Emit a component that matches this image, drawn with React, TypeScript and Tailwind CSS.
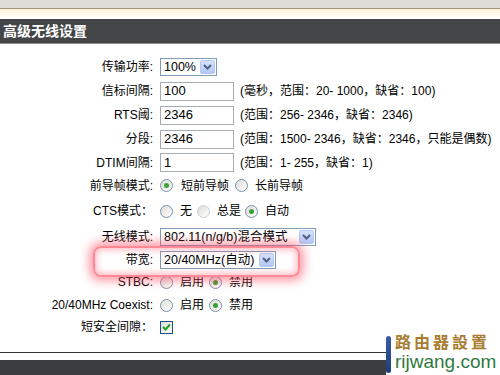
import React from "react"

function Arrow() {
  return (
    <span className="flex h-[14px] w-[15px] items-center justify-center rounded-[2px] border border-[#b4c8f4] bg-gradient-to-b from-[#d6e2fc] to-[#b3c6f5]">
      <svg width="9" height="6" viewBox="0 0 9 6">
        <path d="M1 1 L4.5 4.5 L8 1" fill="none" stroke="#4d6185" strokeWidth="2" />
      </svg>
    </span>
  )
}

function Select({ value, w }: { value: string; w: string }) {
  return (
    <div className={`flex h-[18px] items-center justify-between border border-[#7f9db9] bg-white pl-[3px] pr-px ${w}`}>
      <span className="text-[12.5px] leading-none">{value}</span>
      <Arrow />
    </div>
  )
}

function Input({ value }: { value: string }) {
  return (
    <div className="flex h-[19px] w-[74px] items-center border border-[#a5acb2] bg-white pl-[3px] text-[13px]">
      {value}
    </div>
  )
}

function Radio({ on, faint }: { on?: boolean; faint?: boolean }) {
  return (
    <span
      className={`flex h-[13px] w-[13px] items-center justify-center rounded-full border bg-gradient-to-br from-[#dcdcd7] to-white ${
        faint ? "border-[#c9d3dc]" : "border-[#7b93aa]"
      }`}
    >
      {on && <span className="h-[5px] w-[5px] rounded-full bg-[#3aa03a]" />}
    </span>
  )
}

function Row({ label, h, children }: { label: string; h: string; children: React.ReactNode }) {
  return (
    <div className={`flex items-center ${h}`}>
      <div className="w-[153px] shrink-0 text-right">{label}</div>
      <div className="ml-[7px] flex items-center">{children}</div>
    </div>
  )
}

export default function App() {
  return (
    <div className="relative h-[375px] w-[500px] overflow-hidden bg-white font-['Liberation_Sans','Noto_Sans_CJK_SC',sans-serif] text-[12px] text-black">
      {/* browser chrome strip */}
      <div className="h-[8px] bg-[#dedbd7]" />
      <div className="h-px bg-[#a8907f]" />
      <div className="h-[10px] bg-gradient-to-b from-[#fdf0d6] to-white" />

      {/* title */}
      <div className="flex h-[25px] items-center border-b border-[#8a8a8a] bg-[#434547] pl-[3px] text-[14px] font-bold text-white">
        高级无线设置
      </div>

      <div className="pt-[11px]">
        <Row label="传输功率:" h="h-[24px]">
          <Select value="100%" w="w-[57px]" />
        </Row>
        <Row label="信标间隔:" h="h-[24px]">
          <Input value="100" />
          <span className="ml-[6px]">(毫秒，范围：20- 1000，缺省：100)</span>
        </Row>
        <Row label="RTS阈:" h="h-[24px]">
          <Input value="2346" />
          <span className="ml-[6px]">(范围：256- 2346，缺省：2346)</span>
        </Row>
        <Row label="分段:" h="h-[24px]">
          <Input value="2346" />
          <span className="ml-[6px]">(范围：1500- 2346，缺省：2346，只能是偶数)</span>
        </Row>
        <Row label="DTIM间隔:" h="h-[23px]">
          <Input value="1" />
          <span className="ml-[6px]">(范围：1- 255，缺省：1)</span>
        </Row>
        <Row label="前导帧模式:" h="h-[23px]">
          <Radio on />
          <span className="ml-[8px]">短前导帧</span>
          <span className="ml-[6px]"><Radio /></span>
          <span className="ml-[7px]">长前导帧</span>
        </Row>
        <Row label="CTS模式：" h="h-[28px]">
          <Radio />
          <span className="ml-[7px]">无</span>
          <span className="ml-[5px]"><Radio faint /></span>
          <span className="ml-[7px]">总是</span>
          <span className="ml-[4px]"><Radio on /></span>
          <span className="ml-[7px]">自动</span>
        </Row>
        <Row label="无线模式:" h="h-[24px]">
          <Select value="802.11(n/g/b)混合模式" w="w-[156px]" />
        </Row>
        <Row label="带宽:" h="h-[22px]">
          <Select value="20/40MHz(自动)" w="w-[116px]" />
        </Row>
        <Row label="STBC:" h="h-[22px]">
          <Radio />
          <span className="ml-[7px]">启用</span>
          <span className="ml-[5px]"><Radio on /></span>
          <span className="ml-[7px]">禁用</span>
        </Row>
        <Row label="20/40MHz Coexist:" h="h-[24px]">
          <Radio />
          <span className="ml-[7px]">启用</span>
          <span className="ml-[5px]"><Radio on /></span>
          <span className="ml-[7px]">禁用</span>
        </Row>
        <Row label="短安全间隙：" h="h-[20px]">
          <span className="flex h-[13px] w-[13px] items-center justify-center border border-[#1c5180] bg-gradient-to-br from-[#dcdcd7] to-white">
            <svg width="9" height="8" viewBox="0 0 9 8">
              <path d="M1 4 L3.5 6.5 L8 1.5" fill="none" stroke="#21a121" strokeWidth="2" />
            </svg>
          </span>
        </Row>
      </div>

      {/* footer */}
      <div className="mt-[15px] h-px bg-[#333]" />
      <div className="mt-[7px] h-[20px] bg-[#3c3d3e]" />

      {/* red highlight annotation */}
      <div className="absolute left-[93px] top-[246px] h-[31px] w-[207px] rounded-[8px] border-2 border-[#ff8a95] shadow-[0_0_10px_4px_rgba(255,60,85,0.5),inset_0_0_6px_2px_rgba(255,60,85,0.35)]" />

      {/* watermark */}
      <div className="absolute left-[386px] top-[334px] flex h-[41px] w-[114px] bg-white">
        <div className="mt-[2px] h-[37px] w-[5px] rounded-sm bg-gradient-to-b from-[#3b5aa8] to-[#1f3f7a]" />
        <div className="ml-[4px] flex flex-col">
          <span className="text-[16px] font-bold leading-[18px] tracking-[3px] text-[#a97d32]">路由器設置</span>
          <span className="text-[19px] leading-[20px] text-[#2f7a42]">rijwang.com</span>
        </div>
      </div>
    </div>
  )
}
